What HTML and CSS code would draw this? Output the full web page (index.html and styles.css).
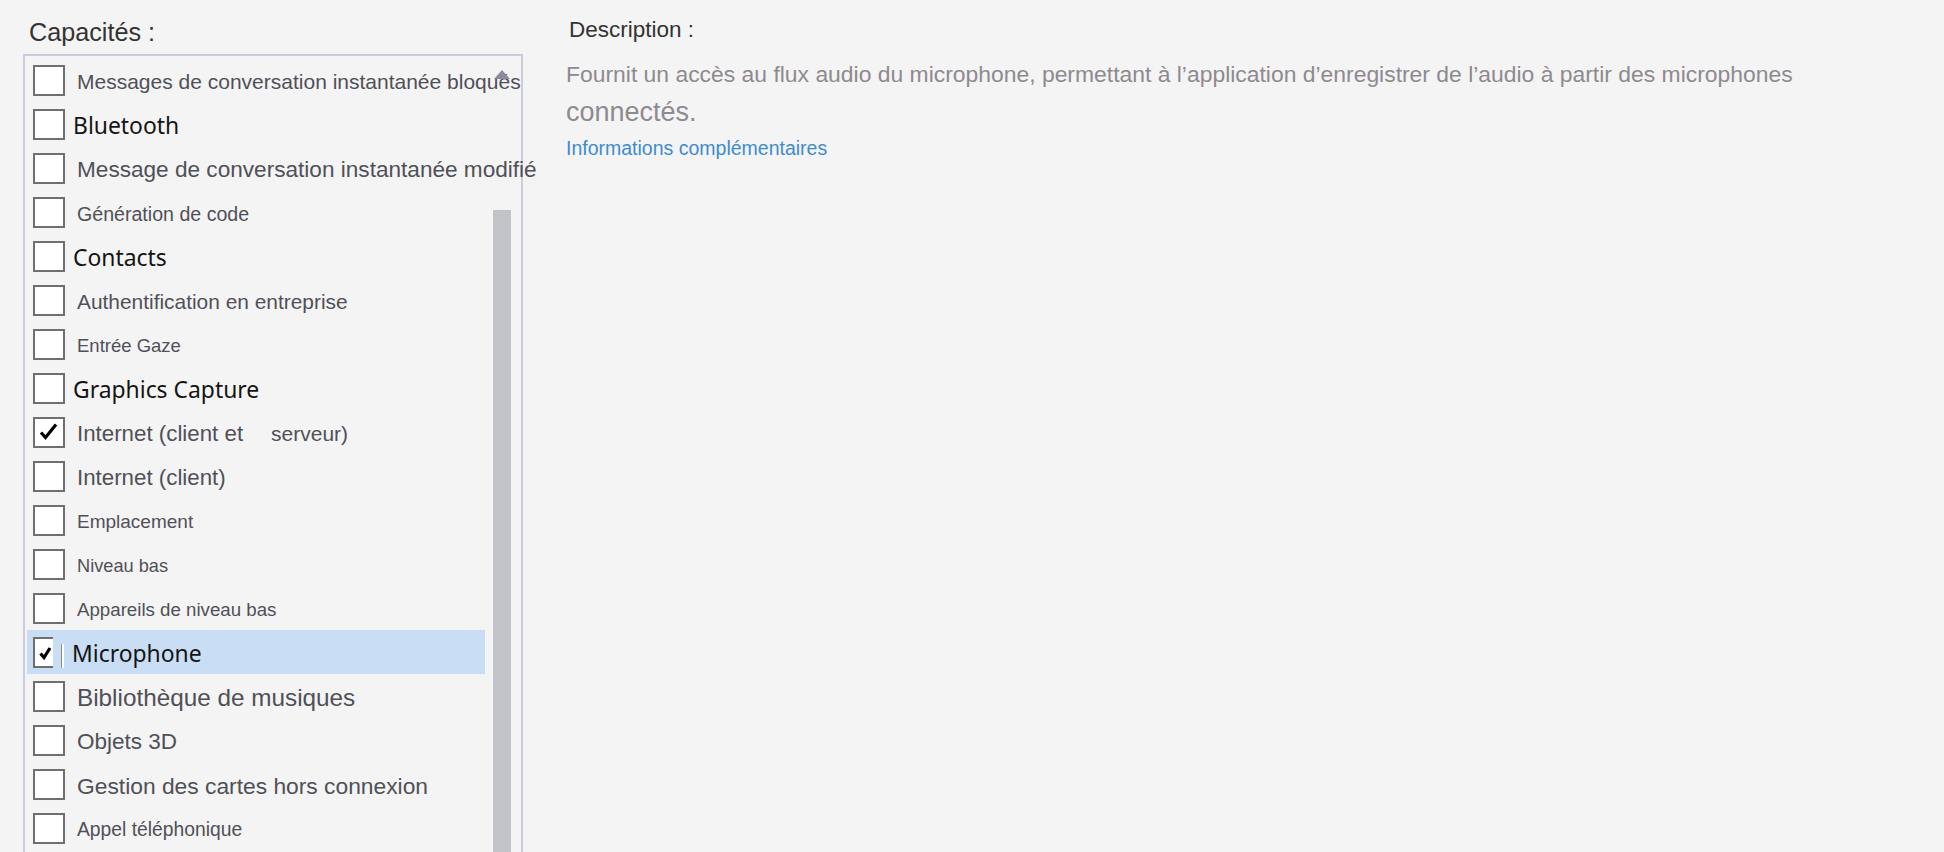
FILE: index.html
```html
<!DOCTYPE html>
<html lang="fr">
<head>
<meta charset="utf-8">
<title>Capacités</title>
<link rel="stylesheet" href="styles.css">
</head>
<body>
<div class="page">
  <section class="caps">
    <div class="caps-title">Capacités :</div>
    <div class="listbox">
      <ul class="rows">
        <li class="row"><span class="cb"></span><span class="lbl g f210">Messages de conversation instantanée bloqués</span></li>
        <li class="row"><span class="cb"></span><span class="lbl k">Bluetooth</span></li>
        <li class="row"><span class="cb"></span><span class="lbl g f226">Message de conversation instantanée modifié</span></li>
        <li class="row"><span class="cb"></span><span class="lbl g f196">Génération de code</span></li>
        <li class="row"><span class="cb"></span><span class="lbl k">Contacts</span></li>
        <li class="row"><span class="cb"></span><span class="lbl g f209">Authentification en entreprise</span></li>
        <li class="row"><span class="cb"></span><span class="lbl g f185">Entrée Gaze</span></li>
        <li class="row"><span class="cb"></span><span class="lbl k">Graphics Capture</span></li>
        <li class="row"><span class="cb"><svg class="tick" viewBox="0 0 28 27"><path d="M6 13.5 L10.5 18.5 L21 5.5"/></svg></span><span class="lbl g f223">Internet (client et<span class="f210 gapword">serveur)</span></span></li>
        <li class="row"><span class="cb"></span><span class="lbl g f223">Internet (client)</span></li>
        <li class="row"><span class="cb"></span><span class="lbl g f190">Emplacement</span></li>
        <li class="row"><span class="cb"></span><span class="lbl g f182">Niveau bas</span></li>
        <li class="row"><span class="cb"></span><span class="lbl g f187">Appareils de niveau bas</span></li>
        <li class="row selected"><span class="cb cut"><svg class="tick small" viewBox="0 0 18 27"><path d="M5.5 14.5 L9 18.5 L15 9"/></svg></span><span class="caret"></span><span class="lbl k">Microphone</span></li>
        <li class="row"><span class="cb"></span><span class="lbl g f243">Bibliothèque de musiques</span></li>
        <li class="row"><span class="cb"></span><span class="lbl g f225">Objets 3D</span></li>
        <li class="row"><span class="cb"></span><span class="lbl g f228">Gestion des cartes hors connexion</span></li>
        <li class="row"><span class="cb"></span><span class="lbl g f193">Appel téléphonique</span></li>
      </ul>
      <div class="scroll">
        <svg class="arrow" viewBox="0 0 18 9"><path d="M9 0 L17 9 L1 9 Z"/></svg>
        <div class="thumb"></div>
      </div>
    </div>
  </section>
  <section class="desc">
    <div class="desc-title">Description :</div>
    <p class="desc-text">Fournit un accès au flux audio du microphone, permettant à l’application d’enregistrer de l’audio à partir des microphones <span class="big">connectés.</span></p>
    <a class="more" href="#">Informations complémentaires</a>
  </section>
</div>
</body>
</html>
```

FILE: styles.css
```css
html, body {
  margin: 0;
  padding: 0;
  height: 852px;
  overflow: hidden;
  background: #f4f4f4;
}

body {
  font-family: "Liberation Sans", Arial, sans-serif;
  color: #333;
}

.page {
  display: flex;
  align-items: flex-start;
  height: 852px;
  overflow: hidden;
}

/* ---------- left column ---------- */
.caps {
  width: 500px;
  padding-left: 23px;
  flex: none;
}

.caps-title {
  font-size: 25.2px;
  line-height: 30px;
  padding-top: 17px;
  margin-bottom: 7px;
  margin-left: 6px;
  color: #333;
}

.listbox {
  box-sizing: border-box;
  width: 500px;
  height: 840px;
  border: 2px solid #c9ccdc;
  display: flex;
  align-items: flex-start;
}

.rows {
  list-style: none;
  margin: 2px 0 0 2px;
  padding: 0;
  width: 458px;
  flex: none;
}

.row {
  display: flex;
  align-items: center;
  height: 44px;
  padding-left: 6px;
  white-space: nowrap;
}

.row.selected {
  background: #c9ddf4;
}

.cb {
  box-sizing: border-box;
  flex: none;
  width: 32px;
  height: 31px;
  border: 2px solid #6f6f6f;
  background: #fff;
  display: flex;
}

.cb.cut {
  width: 20px;
  border-right: none;
}

.tick {
  width: 28px;
  height: 27px;
}

.tick.small {
  width: 18px;
}

.tick path {
  fill: none;
  stroke: #000;
  stroke-width: 3.2;
  stroke-linejoin: miter;
}

.caret {
  box-sizing: border-box;
  flex: none;
  width: 3px;
  height: 24px;
  margin-left: 8px;
  margin-top: 7px;
  border-left: 1px solid #8a8a8a;
  background: #fff;
}

.lbl {
  line-height: 44px;
  padding-top: 4px;
}

.lbl.g {
  margin-left: 12px;
  color: #505058;
  font-family: "Liberation Sans", Arial, sans-serif;
}

.lbl.k {
  margin-left: 8px;
  color: #141414;
  font-family: "Noto Sans", "Open Sans", sans-serif;
  font-size: 22.9px;
}

.gapword { margin-left: 28px; }

.f182 { font-size: 18.2px; }
.f185 { font-size: 18.5px; }
.f187 { font-size: 18.7px; }
.f190 { font-size: 19px; }
.f193 { font-size: 19.3px; }
.f196 { font-size: 19.6px; }
.f209 { font-size: 20.9px; }
.f210 { font-size: 21px; }
.f223 { font-size: 22.3px; }
.f225 { font-size: 22.5px; }
.f226 { font-size: 22.6px; }
.f228 { font-size: 22.8px; }
.f243 { font-size: 24.3px; }

.scroll {
  flex: none;
  width: 18px;
  margin-left: 8px;
  display: flex;
  flex-direction: column;
}

.arrow {
  width: 18px;
  height: 9px;
  margin-top: 14px;
}

.arrow path { fill: #8c8c9a; }

.thumb {
  margin-top: 131px;
  height: 700px;
  background: #c2c3c8;
}

/* ---------- right column ---------- */
.desc {
  flex: none;
  padding-left: 43px;
  width: 1260px;
}

.desc-title {
  font-size: 22.5px;
  line-height: 30px;
  padding-top: 15px;
  margin-left: 3px;
  color: #333;
}

.desc-text {
  margin: 10px 0 0 0;
  font-size: 22.9px;
  line-height: 38px;
  color: #8e8a8f;
}

.desc-text .big {
  font-size: 27px;
}

.more {
  display: block;
  margin-top: 4px;
  font-size: 19.5px;
  line-height: 24px;
  color: #3f8bd0;
  text-decoration: none;
}
```
